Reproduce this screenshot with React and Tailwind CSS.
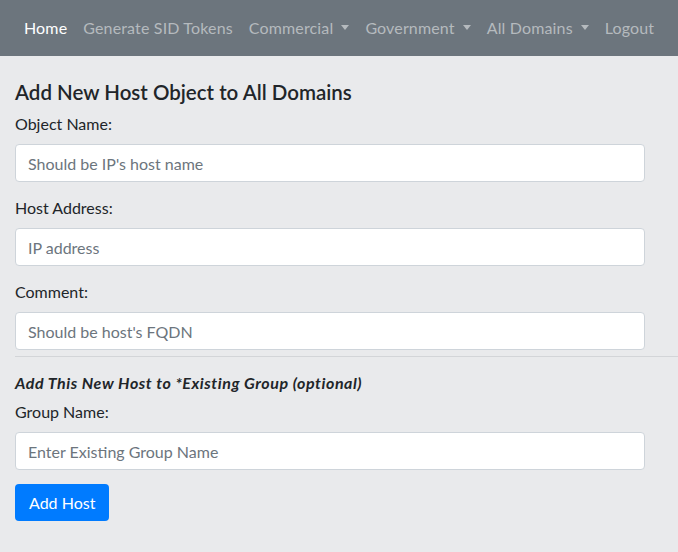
import React from 'react';

const navItems = [
  { label: 'Home', active: true },
  { label: 'Generate SID Tokens' },
  { label: 'Commercial', dropdown: true },
  { label: 'Government', dropdown: true },
  { label: 'All Domains', dropdown: true },
  { label: 'Logout' },
];

function Caret() {
  return (
    <span className="ml-[8px] inline-block align-[4px] border-x-[4.5px] border-t-[5px] border-x-transparent border-t-current" />
  );
}

function Field({ label, placeholder }) {
  return (
    <div className="mb-[14px]">
      <label className="mb-2 block leading-6">{label}</label>
      <input
        type="text"
        placeholder={placeholder}
        className="block h-[38px] w-[630px] rounded border border-[#ced4da] bg-white px-3 text-base text-[#495057] placeholder:text-[#6c757d] outline-none"
      />
    </div>
  );
}

export default function App() {
  return (
    <div className="min-h-[552px] bg-[#e9eaec] text-[#212529] font-['Segoe_UI','Lato','Noto_Sans',sans-serif] text-base">
      <nav className="flex h-14 items-center overflow-hidden bg-[#6c757d] px-4">
        {navItems.map((item) => (
          <a
            key={item.label}
            href="#"
            className={`shrink-0 whitespace-nowrap px-2 leading-6 tracking-[0.15px] ${item.active ? 'text-white' : 'text-[#b5babe]'}`}
          >
            {item.label}
            {item.dropdown && <Caret />}
          </a>
        ))}
      </nav>

      <div className="pt-[24px] pl-[15px]">
        <h5 className="mb-2 text-[20.5px] font-semibold leading-6">Add New Host Object to All Domains</h5>
        <Field label="Object Name:" placeholder="Should be IP's host name" />
        <Field label="Host Address:" placeholder="IP address" />
        <div className="mb-[6px]">
          <label className="mb-2 block leading-6">Comment:</label>
          <input
            type="text"
            placeholder="Should be host's FQDN"
            className="block h-[38px] w-[630px] rounded border border-[#ced4da] bg-white px-3 text-base text-[#495057] placeholder:text-[#6c757d] outline-none"
          />
        </div>
        <hr className="border-t border-[#d3d5d8]" />
        <p className="mt-[14px] mb-[5px] font-bold italic leading-6 tracking-[0.55px]">Add This New Host to *Existing Group (optional)</p>
        <Field label="Group Name:" placeholder="Enter Existing Group Name" />
        <button className="h-[37px] rounded bg-[#007bff] px-[14px] leading-6 text-white">Add Host</button>
      </div>
    </div>
  );
}
